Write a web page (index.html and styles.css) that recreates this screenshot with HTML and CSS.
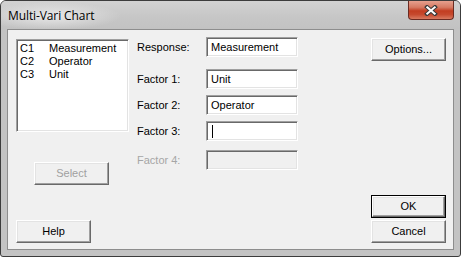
FILE: index.html
```html
<!DOCTYPE html>
<html>
<head>
<meta charset="utf-8">
<link rel="stylesheet" href="styles.css">
</head>
<body>
<div class="window">
  <div class="titlebar">
    <span class="title">Multi-Vari Chart</span>
    <div class="close">
      <svg width="14" height="11" viewBox="0 0 14 11">
        <path d="M3 2 L11 9 M11 2 L3 9" stroke="#3a3a3a" stroke-width="4" stroke-linecap="square"/>
        <path d="M3.3 2.3 L10.7 8.7 M10.7 2.3 L3.3 8.7" stroke="#ffffff" stroke-width="2" stroke-linecap="square"/>
      </svg>
    </div>
  </div>
  <div class="client">
    <div class="col-left">
      <div class="listbox">
        <div class="item"><span class="cid">C1</span><span>Measurement</span></div>
        <div class="item"><span class="cid">C2</span><span>Operator</span></div>
        <div class="item"><span class="cid">C3</span><span>Unit</span></div>
      </div>
      <div class="btn btn-select disabled">Select</div>
      <div class="btn btn-help">Help</div>
    </div>
    <div class="col-mid">
      <div class="row row-resp"><span class="lbl">Response:</span><div class="field">Measurement</div></div>
      <div class="row row-f1"><span class="lbl">Factor 1:</span><div class="field">Unit</div></div>
      <div class="row row-f2"><span class="lbl">Factor 2:</span><div class="field">Operator</div></div>
      <div class="row row-f3"><span class="lbl">Factor 3:</span><div class="field"><span class="caret"></span></div></div>
      <div class="row row-f4"><span class="lbl disabled">Factor 4:</span><div class="field field-disabled"></div></div>
    </div>
    <div class="col-right">
      <div class="btn btn-options">Options...</div>
      <div class="default-wrap"><div class="btn btn-ok">OK</div></div>
      <div class="btn btn-cancel">Cancel</div>
    </div>
  </div>
</div>
</body>
</html>
```
FILE: styles.css
```css
html, body {
  margin: 0;
  padding: 0;
  background: #ffffff;
}
body {
  width: 461px;
  height: 257px;
  overflow: hidden;
  font-family: "Liberation Sans", Arial, sans-serif;
  font-size: 11px;
  color: #000;
}
.window {
  box-sizing: border-box;
  width: 461px;
  height: 257px;
  border: 1px solid #3c3c3c;
  border-radius: 6px 6px 3px 3px;
  background: #c3c3c3;
  display: flex;
  flex-direction: column;
  padding: 0 6px 6px 6px;
}
.titlebar {
  height: 28px;
  margin: 0 -6px;
  padding: 0 0 0 7px;
  display: flex;
  justify-content: space-between;
  align-items: flex-start;
  background:
    radial-gradient(ellipse 70px 14px at 50px 15px, rgba(235,235,235,0.9), rgba(235,235,235,0) 100%),
    linear-gradient(to bottom, #d2d2d2 0%, #c6c6c6 60%, #c2c2c2 100%);
  border-radius: 5px 5px 0 0;
}
.title {
  font-family: "Open Sans", "Noto Sans", sans-serif;
  font-size: 12px;
  line-height: 28px;
  margin-top: 1px;
  color: #000;
  letter-spacing: -0.1px;
}
.close {
  width: 44px;
  height: 18px;
  margin-right: 6px;
  border: 1px solid #6a2b22;
  border-top: none;
  border-radius: 0 0 4px 4px;
  background: linear-gradient(to bottom, #e6a08e 0%, #d57a63 35%, #c23d21 55%, #c6492e 75%, #d87a60 100%);
  display: flex;
  align-items: center;
  justify-content: center;
}
.client {
  flex: 1;
  border: 1px solid #8d8d8d;
  background: #f0f0f0;
  display: flex;
  padding: 0 7px 6px 8px;
}
.col-left {
  width: 113px;
  display: flex;
  flex-direction: column;
}
.listbox {
  box-sizing: border-box;
  width: 113px;
  height: 93px;
  margin-top: 9px;
  background: #fff;
  border-style: solid;
  border-width: 1px;
  border-color: #a0a0a0 #ffffff #ffffff #a0a0a0;
  box-shadow: inset 1px 1px 0 #696969, inset -1px -1px 0 #e3e3e3;
  padding: 2px 0 0 3px;
}
.item {
  display: flex;
  height: 13px;
  line-height: 13px;
}
.cid {
  width: 29px;
}
.btn {
  box-sizing: border-box;
  width: 75px;
  height: 23px;
  background: #f0f0f0;
  border-style: solid;
  border-width: 1px;
  border-color: #ffffff #696969 #696969 #ffffff;
  box-shadow: inset -1px -1px 0 #a0a0a0, inset 1px 1px 0 #e3e3e3;
  display: flex;
  align-items: center;
  justify-content: center;
  line-height: 13px;
}
.btn.disabled {
  color: #a0a0a0;
}
.btn-select {
  margin-top: 30px;
  margin-left: 18px;
}
.btn-help {
  margin-top: auto;
}
.col-mid {
  margin-left: 8px;
  width: 161px;
  display: flex;
  flex-direction: column;
}
.row {
  display: flex;
  align-items: center;
  height: 20px;
}
.row-resp { margin-top: 7px; }
.row-f1 { margin-top: 12px; }
.row-f2 { margin-top: 6px; }
.row-f3 { margin-top: 6px; }
.row-f4 { margin-top: 9px; }
.lbl {
  width: 69px;
}
.lbl.disabled {
  color: #a6a6a6;
}
.field {
  box-sizing: border-box;
  width: 92px;
  height: 20px;
  background: #fff;
  border-style: solid;
  border-width: 1px;
  border-color: #a0a0a0 #ffffff #ffffff #a0a0a0;
  box-shadow: inset 1px 1px 0 #696969, inset -1px -1px 0 #e3e3e3;
  padding: 0 0 0 4px;
  display: flex;
  align-items: center;
  line-height: 13px;
}
.field-disabled {
  background: #f0f0f0;
}
.caret {
  display: block;
  width: 1px;
  height: 13px;
  margin-left: 1px;
  background: #000;
}
.col-right {
  margin-left: auto;
  width: 75px;
  display: flex;
  flex-direction: column;
}
.btn-options {
  margin-top: 8px;
}
.default-wrap {
  margin-top: auto;
  box-sizing: border-box;
  width: 75px;
  height: 23px;
  border: 1px solid #000;
}
.btn-ok {
  width: 73px;
  height: 21px;
}
.btn-cancel {
  margin-top: 2px;
}
```
